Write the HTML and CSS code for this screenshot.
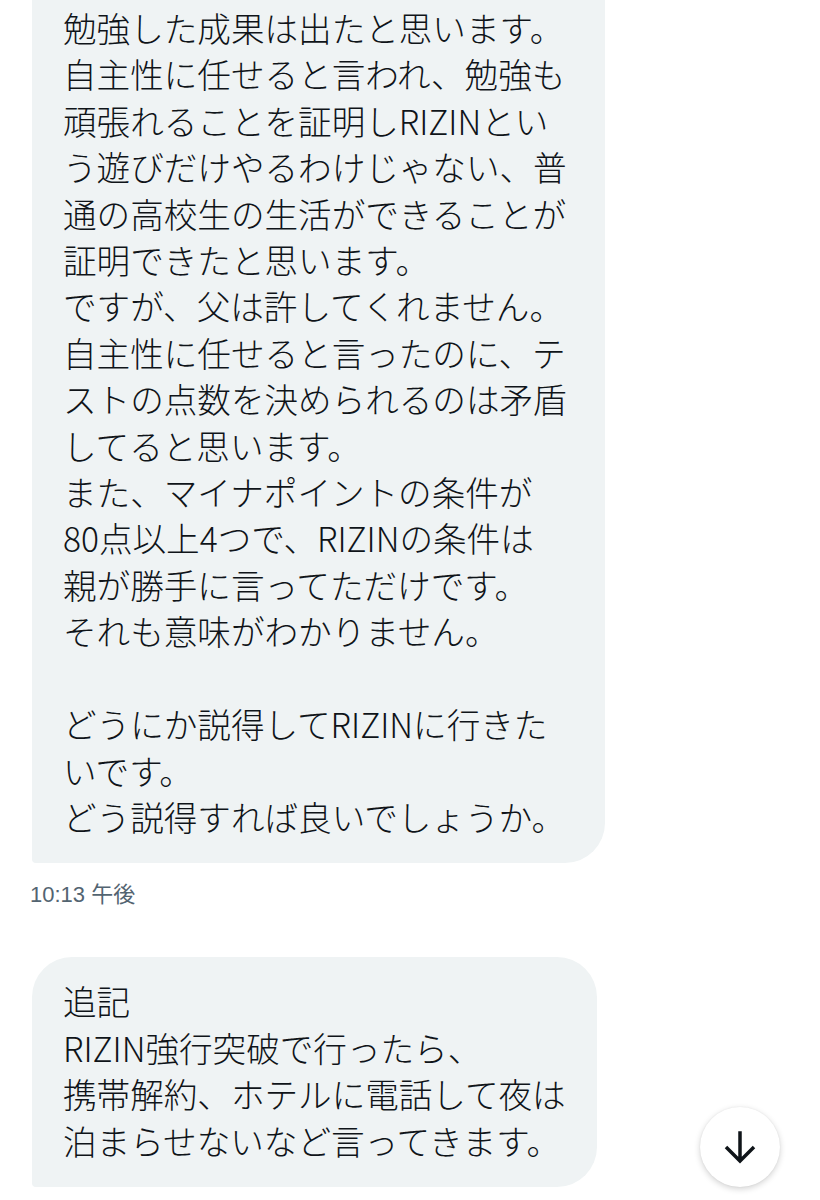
FILE: index.html
```html
<!DOCTYPE html>
<html lang="ja">
<head>
  <meta charset="UTF-8" />
  <meta name="viewport" content="width=device-width, initial-scale=1.0"/>
  <title>メッセージ</title>
  <link rel="stylesheet" href="styles.css">
</head>
<body>
  <div class="thread">
    <div class="message">
      <div class="bubble bubble-cut">
        勉強した成果は出たと思います。<br>
        自主性に任せると言われ、勉強も<br>
        頑張れることを証明しRIZINとい<br>
        う遊びだけやるわけじゃない、普<br>
        通の高校生の生活ができることが<br>
        証明できたと思います。<br>
        ですが、父は許してくれません。<br>
        自主性に任せると言ったのに、テ<br>
        ストの点数を決められるのは矛盾<br>
        してると思います。<br>
        また、マイナポイントの条件が<br>
        80点以上4つで、RIZINの条件は<br>
        親が勝手に言ってただけです。<br>
        それも意味がわかりません。<br>
        <br>
        どうにか説得してRIZINに行きた<br>
        いです。<br>
        どう説得すれば良いでしょうか。
      </div>
      <div class="time">10:13 午後</div>
    </div>

    <div class="message">
      <div class="bubble bubble-last">
        追記<br>
        RIZIN強行突破で行ったら、<br>
        携帯解約、ホテルに電話して夜は<br>
        泊まらせないなど言ってきます。
      </div>
    </div>
  </div>

  <button class="scroll-down" aria-label="下へ移動">
    <svg viewBox="0 0 24 24" width="42" height="42">
      <path d="M12 3v17M4 12 12 20l8-8" fill="none" stroke="#0f1419" stroke-width="2"/>
    </svg>
  </button>
</body>
</html>
```

FILE: styles.css
```css
body {
  margin: 0;
  background: #ffffff;
  font-family: "Noto Sans CJK JP", "Noto Sans", sans-serif;
  color: #0f1419;
  overflow: hidden;
}

.thread {
  padding: 0 32px;
  display: flex;
  flex-direction: column;
}

.message {
  display: flex;
  flex-direction: column;
  align-items: flex-start;
}

.bubble {
  background: #eff3f4;
  font-size: 33.6px;
  font-weight: 300;
  line-height: 46.4px;
  white-space: nowrap;
  padding: 21px 31px 23px;
  border-radius: 40px 40px 40px 4px;
  box-sizing: border-box;
}

.bubble-cut {
  width: 573px;
  padding-top: 5px;
  padding-bottom: 23px;
  border-radius: 0 0 40px 4px;
}

.bubble-last {
  width: 565px;
  margin-top: 47px;
}

.time {
  margin-top: 17px;
  margin-left: -2px;
  font-size: 22px;
  line-height: 30px;
  color: #536471;
  font-family: "Liberation Sans", "Noto Sans CJK JP", sans-serif;
}

.scroll-down {
  position: absolute;
  left: 700px;
  top: 1107px;
  width: 80px;
  height: 80px;
  border: none;
  border-radius: 50%;
  background: #ffffff;
  box-shadow: 0 2px 6px rgba(0, 0, 0, 0.18), 0 0 2px rgba(0, 0, 0, 0.06);
  display: flex;
  align-items: center;
  justify-content: center;
  padding: 0;
  cursor: pointer;
}
```
